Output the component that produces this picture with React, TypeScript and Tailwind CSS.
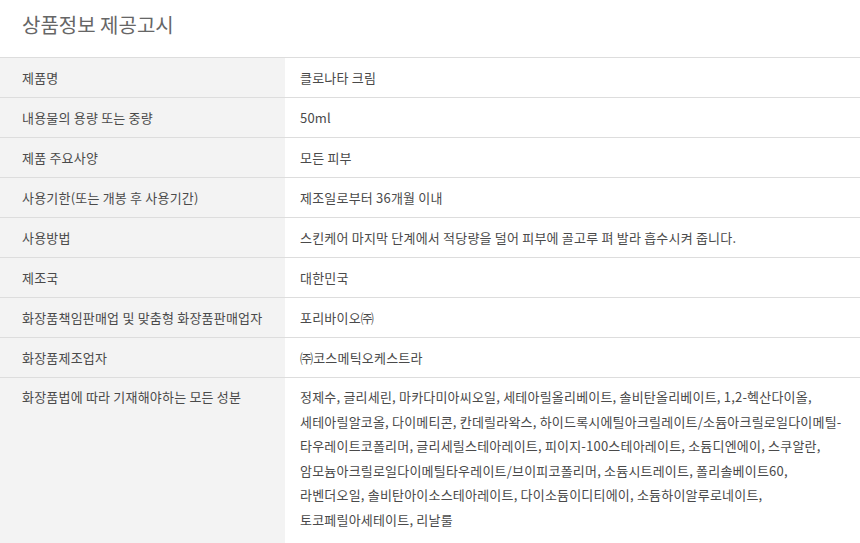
import React from "react";

const rows: [string, string][] = [
  ["제품명", "클로나타 크림"],
  ["내용물의 용량 또는 중량", "50ml"],
  ["제품 주요사양", "모든 피부"],
  ["사용기한(또는 개봉 후 사용기간)", "제조일로부터 36개월 이내"],
  ["사용방법", "스킨케어 마지막 단계에서 적당량을 덜어 피부에 골고루 펴 발라 흡수시켜 줍니다."],
  ["제조국", "대한민국"],
  ["화장품책임판매업 및 맞춤형 화장품판매업자", "포리바이오㈜"],
  ["화장품제조업자", "㈜코스메틱오케스트라"],
];

const ingredients = [
  "정제수, 글리세린, 마카다미아씨오일, 세테아릴올리베이트, 솔비탄올리베이트, 1,2-헥산다이올,",
  "세테아릴알코올, 다이메티콘, 칸데릴라왁스, 하이드록시에틸아크릴레이트/소듐아크릴로일다이메틸-",
  "타우레이트코폴리머, 글리세릴스테아레이트, 피이지-100스테아레이트, 소듐디엔에이, 스쿠알란,",
  "암모늄아크릴로일다이메틸타우레이트/브이피코폴리머, 소듐시트레이트, 폴리솔베이트60,",
  "라벤더오일, 솔비탄아이소스테아레이트, 다이소듐이디티에이, 소듐하이알루로네이트,",
  "토코페릴아세테이트, 리날룰",
];

export default function App() {
  return (
    <div
      className="w-[860px] h-[543px] overflow-hidden bg-white text-[#4a4a4a]"
      style={{ fontFamily: '"Noto Sans CJK KR", "Noto Sans", sans-serif' }}
    >
      <div className="h-[57px] flex items-center pl-[22px] pb-[7px]">
        <h1 className="text-[20px] text-[#666]">상품정보 제공고시</h1>
      </div>
      <div className="text-[13px] tracking-[0.2px]">
        {rows.map(([k, v]) => (
          <div key={k} className="flex h-[40px] border-t border-[#ddd]">
            <div className="w-[285px] shrink-0 bg-[#f3f3f3] pl-[22px] flex items-center">{k}</div>
            <div className="pl-[15px] flex items-center">{v}</div>
          </div>
        ))}
        <div className="flex border-t border-[#ddd] h-[200px]">
          <div className="w-[285px] shrink-0 bg-[#f3f3f3] pl-[22px] pt-[7px] leading-[24.6px]">
            화장품법에 따라 기재해야하는 모든 성분
          </div>
          <div className="pl-[15px] pt-[7px] leading-[24.6px] whitespace-nowrap">
            {ingredients.map((l, i) => (
              <div key={i}>{l}</div>
            ))}
          </div>
        </div>
      </div>
    </div>
  );
}
